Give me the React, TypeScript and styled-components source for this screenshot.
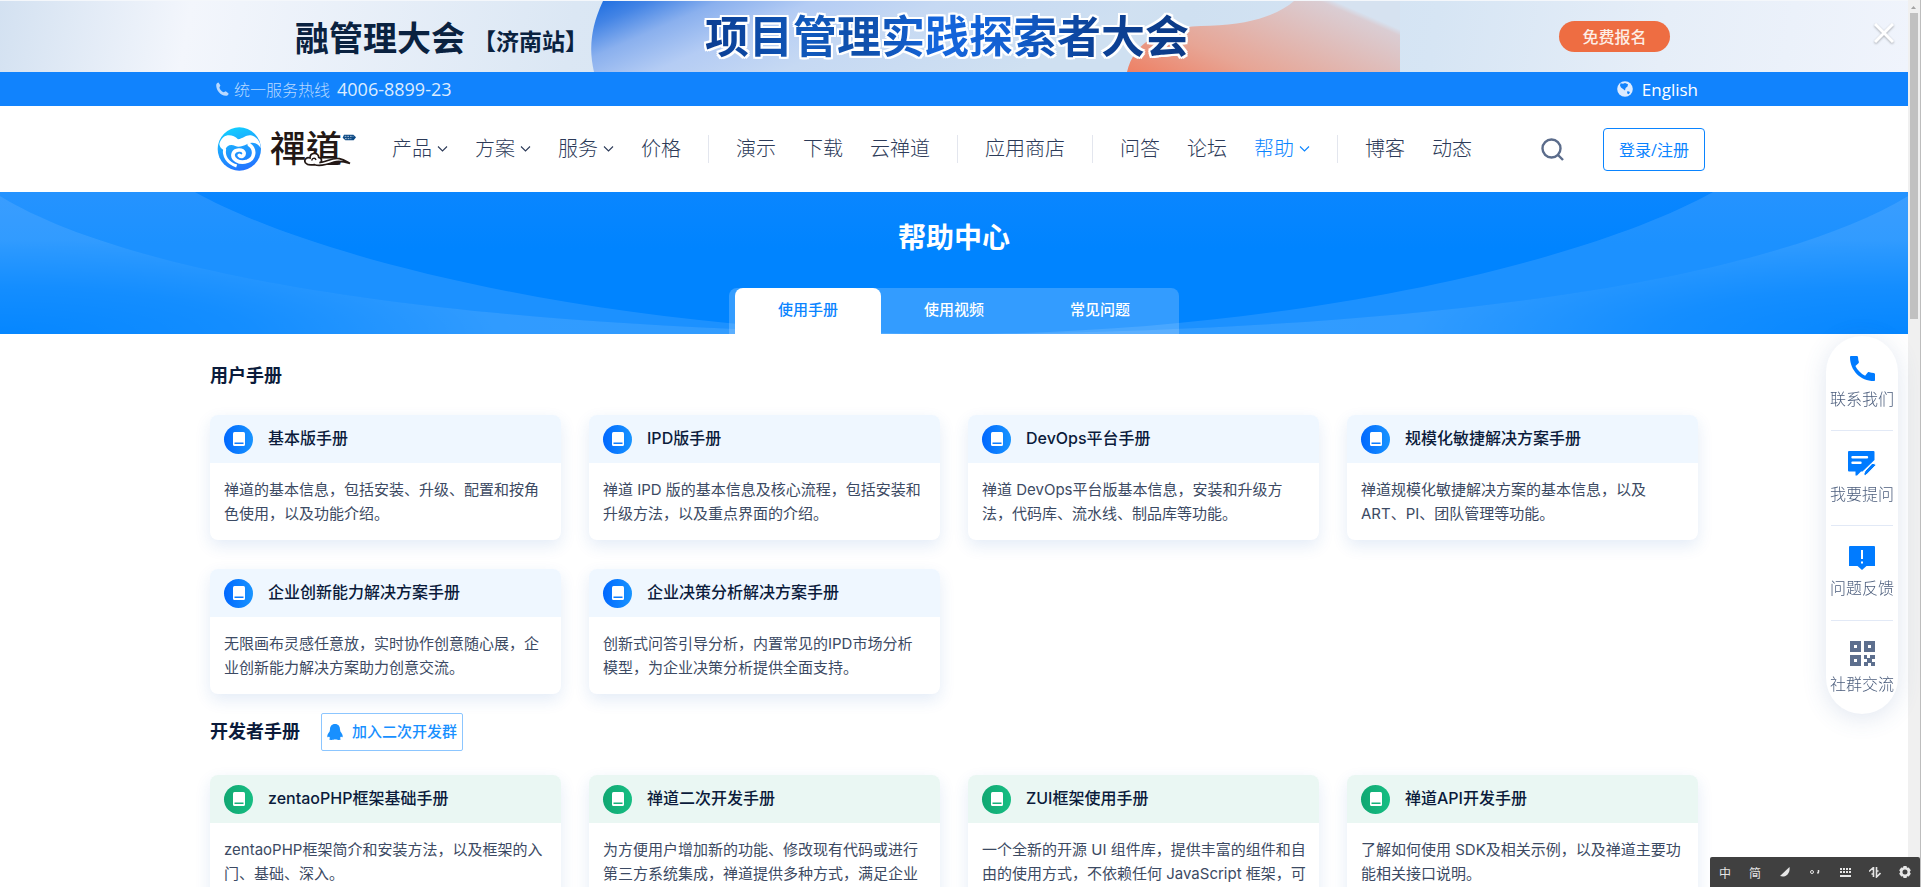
import React from "react";
import styled, { createGlobalStyle, css } from "styled-components";

const Global = createGlobalStyle`
  *, *::before, *::after { box-sizing: border-box; }
  body {
    margin: 0;
    background: #fff;
    color: #3c4a63;
    font-family: Inter, "Noto Sans CJK SC", sans-serif;
    font-size: 15px;
  }
  h1, h2, h3, p, ul { margin: 0; padding: 0; }
  ul { list-style: none; }
  a { color: inherit; text-decoration: none; }
  button { font: inherit; cursor: pointer; }
  svg { display: block; flex: none; }
`;

const latin = `"Open Sans", "Noto Sans CJK SC", sans-serif`;

const Window = styled.div`
  display: flex;
  height: 100vh;
  overflow: hidden;
`;

const Page = styled.div`
  flex: 1;
  min-width: 0;
  overflow: hidden;
`;

const Container = styled.div`
  width: 78%;
  max-width: 1488px;
  margin: 0 auto;
`;

/* ---------- promotion banner ---------- */

const Banner = styled.div`
  position: relative;
  height: 72px;
  border-top: 1px solid #f4f7fb;
  background: linear-gradient(100deg, #d3e1f1 0%, #f3f6fc 10%, #dbe7f4 30%, #cfe0f1 62%, #d6e5f4 75%, #e6eef8 87%, #f0f4fc 100%);
`;

const BannerArt = styled.svg`
  position: absolute;
  inset: 0;
  width: 100%;
  height: 100%;
`;

const BannerRow = styled(Container)`
  position: relative;
  display: flex;
  align-items: center;
  height: 100%;
  padding: 0 28px 0 85px;
  white-space: nowrap;
`;

const EventName = styled.strong`
  color: #0a2240;
  font-size: 34px;
  font-weight: 700;
`;

const EventCity = styled.span`
  margin-left: 8px;
  padding-top: 6px;
  color: #0a2240;
  font-size: 23px;
  font-weight: 700;
`;

const EventTitle = styled.strong`
  margin-left: 117px;
  font-size: 44px;
  line-height: 60px;
  font-weight: 700;
  color: transparent;
  background: linear-gradient(90deg, #0b3d91, #1059bd 22%, #0f4ea8 32%, #1465dc 48%, #1260d2 62%, #0c4298 80%, #0c3a86);
  background-clip: text;
  filter: drop-shadow(2px 0 0 #fff) drop-shadow(-2px 0 0 #fff) drop-shadow(0 2px 0 #fff) drop-shadow(0 -2px 0 #fff);
`;

const Signup = styled.button`
  width: 111px;
  height: 31px;
  margin-left: auto;
  padding: 0;
  border: 0;
  border-radius: 16px;
  background: #ee6d42;
  color: #fdeee6;
  font-size: 16px;
  line-height: 30px;
  font-weight: 500;
`;

const BannerClose = styled.button`
  position: absolute;
  top: 22px;
  right: 14px;
  padding: 0;
  border: 0;
  background: none;
  color: #fff;
  filter: drop-shadow(0 1px 1px rgba(0, 0, 0, 0.3));
`;

/* ---------- hotline bar and navigation ---------- */

const TopBar = styled.div`
  background: #1183fd;
`;

const TopRow = styled(Container)`
  display: flex;
  align-items: center;
  justify-content: space-between;
  height: 34px;
  padding-left: 6px;
  color: #fff;
  font-family: ${latin};
  font-size: 18px;
`;

const Hotline = styled.a`
  display: flex;
  align-items: center;
  color: #dcecff;
`;

const HotlineLabel = styled.span`
  margin: 0 7px 0 5px;
  color: #b9d9ff;
  font-size: 16px;
  font-weight: 300;
`;

const Language = styled.a`
  display: flex;
  align-items: center;
  gap: 9px;
  font-size: 17px;
`;

const NavRow = styled(Container)`
  display: flex;
  align-items: center;
  height: 86px;
  padding-left: 7px;
`;

const Logo = styled.a`
  display: flex;
  align-items: center;
  position: relative;
  width: 139px;
  height: 44px;
  padding: 0 0 6px 53px;
  color: #231815;
  font-family: "Noto Sans CJK TC", sans-serif;
  font-size: 36px;
  line-height: 36px;
  font-weight: 500;
  white-space: nowrap;
`;

const LogoArt = styled.svg`
  position: absolute;
  top: 0;
  left: 0;
`;

const NavList = styled.ul`
  display: flex;
  align-items: center;
  gap: 27px;
  margin-left: 36px;
  font-size: 20px;
  font-weight: 300;
  line-height: 28px;
  white-space: nowrap;
`;

const NavItem = styled.li<{ $active?: boolean; $divided?: boolean }>`
  display: flex;
  align-items: center;
  gap: 27px;
  color: ${(p) => (p.$active ? "#0a84ff" : "#2c3a58")};
  &::before {
    content: ${(p) => (p.$divided ? '""' : "none")};
    width: 1px;
    height: 28px;
    background: #e3e6ee;
  }
  a {
    display: flex;
    align-items: center;
    gap: 5px;
  }
`;

const SearchButton = styled.button`
  margin-left: auto;
  padding: 0;
  border: 0;
  background: none;
  color: #5b6c8b;
`;

const LoginButton = styled.a`
  display: flex;
  align-items: center;
  justify-content: center;
  width: 102px;
  height: 43px;
  margin: 0 -7px 0 39px;
  border: 1px solid #0a84ff;
  border-radius: 4px;
  color: #0a84ff;
  font-size: 16px;
  font-family: ${latin};
`;

/* ---------- hero ---------- */

const Hero = styled.header`
  position: relative;
  display: flex;
  flex-direction: column;
  align-items: center;
  justify-content: space-between;
  height: 142px;
  padding-top: 26px;
  background: linear-gradient(#0a86ff, #0084ff 40%);
`;

const HeroArt = styled.svg`
  position: absolute;
  inset: 0;
  width: 100%;
  height: 100%;
`;

const HeroTitle = styled.h1`
  position: relative;
  color: #fff;
  font-size: 28px;
  line-height: 40px;
  font-weight: 700;
`;

const Tabs = styled.nav`
  position: relative;
  display: flex;
  padding: 0 6px;
  border-radius: 8px 8px 0 0;
  background: rgba(255, 255, 255, 0.2);
`;

const Tab = styled.a<{ $active?: boolean }>`
  width: 146px;
  height: 46px;
  border-radius: 8px 8px 0 0;
  background: ${(p) => (p.$active ? "#fff" : "none")};
  color: ${(p) => (p.$active ? "#0a84ff" : "#fff")};
  line-height: 43px;
  font-weight: 500;
  text-align: center;
`;

/* ---------- manuals ---------- */

const Main = styled.main`
  padding-top: 8px;
`;

const Section = styled(Container).attrs({ as: "section" })`
  padding-top: 19px;
`;

const SectionHead = styled.div`
  display: flex;
  align-items: center;
  gap: 21px;
  margin-bottom: 24px;
`;

const SectionTitle = styled.h2`
  color: #0b1b3b;
  font-size: 18px;
  line-height: 30px;
  font-weight: 700;
`;

const JoinGroup = styled.a`
  display: flex;
  align-items: center;
  gap: 9px;
  height: 38px;
  padding: 0 5px;
  border: 1px solid #8cc6ff;
  border-radius: 2px;
  color: #1890ff;
  line-height: 34px;
  font-weight: 500;
`;

const Grid = styled.div`
  display: grid;
  grid-template-columns: repeat(4, 1fr);
  gap: 29px 28px;
`;

const Card = styled.a`
  display: block;
  overflow: hidden;
  border-radius: 8px;
  background: #fff;
  box-shadow: 0 6px 16px rgba(30, 100, 190, 0.12);
`;

const CardHead = styled.div<{ $green?: boolean }>`
  display: flex;
  align-items: center;
  gap: 15px;
  height: 48px;
  padding: 0 14px;
  background: ${(p) => (p.$green ? "#eaf7f3" : "#eff7ff")};
`;

const CardIcon = styled.span<{ $green?: boolean }>`
  display: grid;
  place-items: center;
  width: 29px;
  height: 29px;
  border-radius: 50%;
  ${(p) =>
    p.$green
      ? css`
          color: #14b27a;
          background: linear-gradient(90deg, #11a772, #17be83);
        `
      : css`
          color: #0d7dff;
          background: linear-gradient(90deg, #0168ff, #1894ff);
        `}
`;

const CardTitle = styled.h3`
  padding-bottom: 2px;
  color: #0b1b3b;
  font-size: 16px;
  line-height: 24px;
  font-weight: 500;
`;

const CardText = styled.p`
  padding: 15px 12px 14px 14px;
  line-height: 24px;
  white-space: pre-line;
`;

/* ---------- floating pieces ---------- */

const ContactBar = styled.aside`
  position: fixed;
  top: 336px;
  right: 23px;
  width: 72px;
  padding: 0 5px;
  border-radius: 36px;
  background: #fff;
  box-shadow: 0 4px 24px rgba(60, 100, 160, 0.16);
`;

const ContactItem = styled.a`
  display: flex;
  flex-direction: column;
  align-items: center;
  gap: 6px;
  height: 95px;
  padding-top: 20px;
  border-bottom: 1px solid #e2e9f6;
  color: #4b5d7c;
  font-size: 16px;
  line-height: 24px;
  font-weight: 300;
  white-space: nowrap;
  &:last-child { height: 93px; border: 0; }
`;

const Scrollbar = styled.div`
  width: 13px;
  padding: 13px 2px 0;
  border-right: 1px solid #bdbdbd;
  background: #f0f0f0;
  &::before {
    content: "";
    display: block;
    height: 306px;
    background: #c1c1c1;
  }
`;

const ScrollArrow = styled.svg`
  position: fixed;
  top: 6px;
  right: 5px;
`;

const ImeBar = styled.div`
  position: fixed;
  right: 1px;
  bottom: 0;
  display: grid;
  grid-template-columns: repeat(7, 30px);
  place-items: center;
  height: 30px;
  border-radius: 2px 2px 0 0;
  background: #404040;
  color: #e6e6e6;
  font-size: 12px;
`;

/* ---------- icons ---------- */

const Chevron = () => (
  <svg width="11" height="8" viewBox="0 0 11 8" fill="none" stroke="currentColor" strokeWidth="1.1">
    <path d="M1 1.5 5.5 6 10 1.5" />
  </svg>
);

const PhoneIcon = () => (
  <svg width="25" height="25" viewBox="0 0 24 24" fill="#007bff">
    <path d="M1 0H6.5C7 0 7.6.5 7.7 1.2 7.9 3 8 4.5 8.5 5.5 8.7 6.1 8.5 6.6 8.1 7L5.2 9.6C7 13.5 10.5 17 14.5 18.9L17 15.9C17.5 15.5 18 15.4 18.6 15.5 20 16 21.5 16.2 22.8 16.3 23.5 16.4 24 16.9 24 17.6V23C24 23.6 23.5 24 22.9 24 10.2 24 0 13.8 0 1.1 0 .5.5 0 1 0Z" />
  </svg>
);

const Handset = () => (
  <svg width="13" height="14" viewBox="0 0 13 14" fill="#b9d9ff">
    <path d="M2.5.5 4.4 3.5 3.4 5.5C3.8 7.3 5.5 9.4 7.6 10.3L9.8 9.2 12.6 11.4C12.6 12.6 11.3 13.8 9.8 13.8 4.4 13.5.2 8.5.2 3 .4 1.6 1.4.5 2.5.5Z" />
  </svg>
);

const Globe = () => (
  <svg width="16" height="16" viewBox="0 0 16 16">
    <circle cx="8" cy="8" r="7.8" fill="#dcebff" />
    <path d="M3.5 2.3 6 2.7 8 2 11 3.2 10.5 5.5 8.6 7 8 9.6 6.4 8.2 4 6.5 3 4.5ZM10.5 10 13 11 11.8 13.3 10 12.2Z" fill="#1183fd" />
  </svg>
);

const Book = () => (
  <svg width="12" height="14" viewBox="0 0 12 14">
    <rect width="12" height="14" rx="1.5" fill="#fff" />
    <path d="M1.5 10.5H10.5V12H1.5Z" fill="currentColor" />
  </svg>
);

const Bell = () => (
  <svg width="16" height="16" viewBox="0 0 16 16" fill="#1890ff">
    <path d="M8 0C11.4 0 13 2.4 13 5.5L13.4 7.5C15 9.3 16 11.4 15.6 13 15.3 13.7 14.6 13 14 12.4L13 14 13.8 15.2C13.5 16.2 9.5 16.1 8 15.3 6.5 16.1 2.5 16.2 2.2 15.2L3 14 2 12.4C1.4 13 .7 13.7.4 13 0 11.4 1 9.3 2.6 7.5L3 5.5C3 2.4 4.6 0 8 0Z" />
  </svg>
);

const AskIcon = () => (
  <svg width="28" height="25" viewBox="0 0 28 25" fill="#007bff">
    <path d="M1 0H25.5Q26.5 0 26.5 1V9L14.5 20.5H13L9 24.5H7.5V20.5H1Q0 20.5 0 19.5V1Q0 0 1 0Z" />
    <path d="M4.5 6.2H19M4.5 11.8H12.5" stroke="#fff" strokeWidth="2.4" strokeLinecap="round" />
    <path d="M24 12.5Q27.5 11.5 27.6 14.5L19.5 22.8Q17.5 25 16 24.5 15.5 22.5 17 20Z" stroke="#fff" />
  </svg>
);

const FeedbackIcon = () => (
  <svg width="26" height="24" viewBox="0 0 26 24">
    <path d="M1 0H25Q26 0 26 1V20H17.5L13 24 8.5 20H0V1Q0 0 1 0Z" fill="#007bff" />
    <path d="M13 4V13M13 15.5V17.5" stroke="#fff" strokeWidth="2" />
  </svg>
);

const QrIcon = () => (
  <svg width="25" height="25" viewBox="0 0 25 25" fill="#5d6f8e" fillRule="evenodd">
    <path d="M0 0H11V11H0ZM4 4V7H7V4ZM14 0H25V11H14ZM18 4V7H21V4ZM0 14H11V25H0ZM4 18V21H7V18ZM14 14H17V17H20V14H25V18H22V21H25V25H21V22H18V25H14V21H17V18H14Z" />
  </svg>
);

/* ---------- data ---------- */

type NavEntry = { label: string; menu?: boolean; active?: boolean; divided?: boolean };

const navEntries: NavEntry[] = [
  { label: "产品", menu: true },
  { label: "方案", menu: true },
  { label: "服务", menu: true },
  { label: "价格" },
  { label: "演示", divided: true },
  { label: "下载" },
  { label: "云禅道" },
  { label: "应用商店", divided: true },
  { label: "问答", divided: true },
  { label: "论坛" },
  { label: "帮助", menu: true, active: true },
  { label: "博客", divided: true },
  { label: "动态" },
];

type Manual = { title: string; text: string };

const userManuals: Manual[] = [
  { title: "基本版手册", text: "禅道的基本信息，包括安装、升级、配置和按角色使用，以及功能介绍。" },
  { title: "IPD版手册", text: "禅道 IPD 版的基本信息及核心流程，包括安装和升级方法，以及重点界面的介绍。" },
  { title: "DevOps平台手册", text: "禅道 DevOps平台版基本信息，安装和升级方法，代码库、流水线、制品库等功能。" },
  { title: "规模化敏捷解决方案手册", text: "禅道规模化敏捷解决方案的基本信息，以及ART、PI、团队管理等功能。" },
  { title: "企业创新能力解决方案手册", text: "无限画布灵感任意放，实时协作创意随心展，企业创新能力解决方案助力创意交流。" },
  { title: "企业决策分析解决方案手册", text: "创新式问答引导分析，内置常见的IPD市场分析\n模型，为企业决策分析提供全面支持。" },
];

const devManuals: Manual[] = [
  { title: "zentaoPHP框架基础手册", text: "zentaoPHP框架简介和安装方法，以及框架的入门、基础、深入。" },
  { title: "禅道二次开发手册", text: "为方便用户增加新的功能、修改现有代码或进行第三方系统集成，禅道提供多种方式，满足企业" },
  { title: "ZUI框架使用手册", text: "一个全新的开源 UI 组件库，提供丰富的组件和自由的使用方式，不依赖任何 JavaScript 框架，可" },
  { title: "禅道API开发手册", text: "了解如何使用 SDK及相关示例，以及禅道主要功能相关接口说明。" },
];

const contacts = [
  { label: "联系我们", Icon: PhoneIcon },
  { label: "我要提问", Icon: AskIcon },
  { label: "问题反馈", Icon: FeedbackIcon },
  { label: "社群交流", Icon: QrIcon },
];

const ManualGrid = ({ items, green }: { items: Manual[]; green?: boolean }) => (
  <Grid>
    {items.map((m) => (
      <Card key={m.title} href="#">
        <CardHead $green={green}>
          <CardIcon $green={green}>
            <Book />
          </CardIcon>
          <CardTitle>{m.title}</CardTitle>
        </CardHead>
        <CardText>{m.text}</CardText>
      </Card>
    ))}
  </Grid>
);

export default function App() {
  return (
    <>
      <Global />
      <Window>
        <Page>
          <Banner>
            <BannerArt viewBox="0 0 1908 72" preserveAspectRatio="none" aria-hidden="true">
              <defs>
                <linearGradient id="wash" x1="0" y1="0" x2="1" y2="0.3">
                  <stop offset="0" stopColor="#1a6ce0" />
                  <stop offset="0.1" stopColor="#4384e5" />
                  <stop offset="0.22" stopColor="#8ab0ee" />
                  <stop offset="0.38" stopColor="#b4ccf4" />
                  <stop offset="0.6" stopColor="#c6d9f3" />
                  <stop offset="1" stopColor="#cfe0f1" />
                </linearGradient>
                <linearGradient id="coral" x1="0" y1="1" x2="1" y2="0.4">
                  <stop offset="0" stopColor="#ee8064" />
                  <stop offset="0.35" stopColor="#e7a595" />
                  <stop offset="0.96" stopColor="#dacdd3" />
                  <stop offset="1" stopColor="#d6e2f0" />
                </linearGradient>
              </defs>
              <path d="M603 0C590 28 589 50 594 72H1130V0Z" fill="url(#wash)" />
              <path d="M1127 72C1134 42 1160 25 1210 25 1250 24 1278 14 1294 0H1400V72Z" fill="url(#coral)" />
            </BannerArt>
            <BannerRow>
              <EventName>融管理大会</EventName>
              <EventCity>【济南站】</EventCity>
              <EventTitle>项目管理实践探索者大会</EventTitle>
              <Signup>免费报名</Signup>
            </BannerRow>
            <BannerClose aria-label="关闭">
              <svg width="20" height="20" viewBox="0 0 20 20" stroke="currentColor" strokeWidth="3">
                <path d="M1 1 19 19M19 1 1 19" />
              </svg>
            </BannerClose>
          </Banner>

          <TopBar>
            <TopRow>
              <Hotline href="#">
                <Handset />
                <HotlineLabel>统一服务热线</HotlineLabel>
                4006-8899-23
              </Hotline>
              <Language href="#">
                <Globe />
                English
              </Language>
            </TopRow>
          </TopBar>

          <NavRow>
            <Logo href="#">
              禪道
              <LogoArt width="140" height="44" viewBox="21 29 420 132" fill="none" aria-hidden="true">
                <defs>
                  <linearGradient id="ball" x1="0.3" y1="0" x2="0.6" y2="1">
                    <stop offset="0" stopColor="#12d0ff" />
                    <stop offset="0.5" stopColor="#1e9dff" />
                    <stop offset="1" stopColor="#2272ff" />
                  </linearGradient>
                </defs>
                <circle cx="88" cy="95" r="65" fill="url(#ball)" />
                <path d="M28 80C38 46 68 50 84 66 104 62 112 46 134 58 148 68 152 80 152 92 142 76 126 72 112 80 96 88 84 90 76 86 64 80 50 82 46 98 38 98 30 92 28 80Z" fill="#fff" />
                <path d="M118 82C138 96 134 124 112 132 88 140 64 126 70 108 74 96 98 94 102 106 104 116 94 120 88 114" stroke="#fff" strokeWidth="11" strokeLinecap="round" />
                <path d="M44 94C40 116 52 136 80 146" stroke="#fff" strokeWidth="9" />
                <path d="M286 136C280 126 292 118 300 122 300 104 326 104 326 120 338 122 336 136 328 136 350 134 366 120 388 124 402 127 412 134 420 138 400 132 386 130 372 134 350 142 330 148 314 142 304 142 294 146 286 136Z" fill="#fff" stroke="#231815" strokeWidth="5" />
                <path d="M306 130C304 122 316 120 318 128" stroke="#231815" strokeWidth="4" />
                <path d="M402 52H430L438 60 431 69H406L398 61Z" fill="#0d4a85" />
                <path d="M404 57H430M405 64H424" stroke="#fff" strokeWidth="2" strokeDasharray="5 3" />
              </LogoArt>
            </Logo>
            <nav>
              <NavList>
                {navEntries.map((n) => (
                  <NavItem key={n.label} $active={n.active} $divided={n.divided}>
                    <a href="#">
                      {n.label}
                      {n.menu && <Chevron />}
                    </a>
                  </NavItem>
                ))}
              </NavList>
            </nav>
            <SearchButton aria-label="搜索">
              <svg width="23" height="23" viewBox="0 0 23 23" fill="none" stroke="currentColor" strokeWidth="2.4">
                <circle cx="10.5" cy="10.5" r="9" />
                <path d="M16.5 16.5 22 22" />
              </svg>
            </SearchButton>
            <LoginButton href="#">登录/注册</LoginButton>
          </NavRow>

          <Hero>
            <HeroArt viewBox="0 0 1908 142" preserveAspectRatio="none" aria-hidden="true">
              <defs>
                <radialGradient id="glow" gradientUnits="userSpaceOnUse" cx="0" cy="0" r="1" gradientTransform="translate(0 142) scale(1000 190)">
                  <stop offset="0" stopColor="#fff" stopOpacity="0.02" />
                  <stop offset="0.25" stopColor="#fff" stopOpacity="0.08" />
                  <stop offset="0.5" stopColor="#fff" stopOpacity="0.19" />
                  <stop offset="1" stopColor="#fff" stopOpacity="0.2" />
                </radialGradient>
                <g id="sweep">
                  <path d="M0 0H195C330 75 640 142 954 142 520 140 150 95 0 4Z" fill="#fff" fillOpacity="0.11" />
                  <path d="M0 4C150 95 520 140 954 142H0Z" fill="url(#glow)" />
                </g>
              </defs>
              <use href="#sweep" />
              <use href="#sweep" transform="translate(1908 0) scale(-1 1)" />
            </HeroArt>
            <HeroTitle>帮助中心</HeroTitle>
            <Tabs>
              <Tab href="#" $active>使用手册</Tab>
              <Tab href="#">使用视频</Tab>
              <Tab href="#">常见问题</Tab>
            </Tabs>
          </Hero>

          <Main>
            <Section>
              <SectionHead>
                <SectionTitle>用户手册</SectionTitle>
              </SectionHead>
              <ManualGrid items={userManuals} />
            </Section>
            <Section>
              <SectionHead>
                <SectionTitle>开发者手册</SectionTitle>
                <JoinGroup href="#">
                  <Bell />
                  加入二次开发群
                </JoinGroup>
              </SectionHead>
              <ManualGrid items={devManuals} green />
            </Section>
          </Main>
        </Page>

        <Scrollbar />
        <ScrollArrow width="5" height="3" viewBox="0 0 5 3" fill="#a3a3a3" aria-hidden="true">
          <path d="M0 3 2.5 0 5 3Z" />
        </ScrollArrow>
      </Window>

      <ContactBar>
        {contacts.map(({ label, Icon }) => (
          <ContactItem key={label} href="#">
            <Icon />
            {label}
          </ContactItem>
        ))}
      </ContactBar>

      <ImeBar>
        <span>中</span>
        <span>简</span>
        <svg width="10" height="10" viewBox="0 0 10 10" fill="currentColor">
          <path d="M9.5 0C10.5 6 6 11 0 9Z" />
        </svg>
        <svg width="10" height="6" viewBox="0 0 10 6" fill="none" stroke="currentColor">
          <circle cx="2" cy="3" r="1.5" />
          <path d="M8.5 1V3L7.5 4.5" strokeWidth="1.5" />
        </svg>
        <svg width="11" height="9" viewBox="0 0 11 9" stroke="currentColor">
          <path d="M0 1H11M0 4H11" strokeWidth="2" strokeDasharray="2 1" />
          <path d="M0 8H11" strokeWidth="2" />
        </svg>
        <svg width="12" height="11" viewBox="0 0 12 11" fill="none" stroke="currentColor" strokeWidth="1.6">
          <path d="M0 4.5 4.5.5V10M7.5 0V10L11.5 6M2.5 7H5M7 4H9.5" />
        </svg>
        <svg width="12" height="12" viewBox="0 0 12 12" fill="currentColor" fillRule="evenodd">
          <path d="M4.5 0H7.5L8 1.8 9.8 1.4 11.8 4.2 10.7 6 11.8 7.8 9.8 10.6 8 10.2 7.5 12H4.5L4 10.2 2.2 10.6.2 7.8 1.3 6 .2 4.2 2.2 1.4 4 1.8ZM6 3.5A2.5 2.5 0 1 0 6 8.5 2.5 2.5 0 1 0 6 3.5Z" />
        </svg>
      </ImeBar>
    </>
  );
}
